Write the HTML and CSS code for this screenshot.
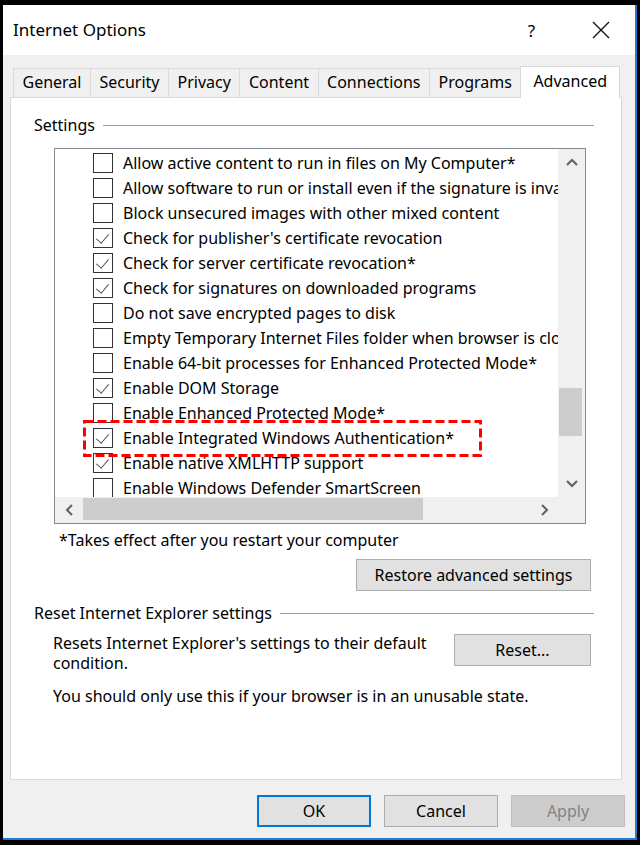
FILE: index.html
```html
<!DOCTYPE html>
<html lang="en">
<head>
<meta charset="utf-8">
<title>Internet Options</title>
<link rel="stylesheet" href="styles.css">
</head>
<body>
<div class="window">
  <div class="titlebar">
    <span class="title">Internet Options</span>
    <span class="caption-btn help">?</span>
    <span class="caption-btn close">
      <svg width="18" height="18" viewBox="0 0 18 18"><path d="M1 1 L17 17 M17 1 L1 17" stroke="#111" stroke-width="1.3" fill="none"/></svg>
    </span>
  </div>
  <div class="client">
    <div class="tabs">
      <div class="tab">General</div>
      <div class="tab">Security</div>
      <div class="tab">Privacy</div>
      <div class="tab">Content</div>
      <div class="tab">Connections</div>
      <div class="tab">Programs</div>
      <div class="tab active">Advanced</div>
    </div>
    <div class="panel">
      <div class="group-head"><span>Settings</span><i class="rule"></i></div>
      <div class="listbox">
        <ul class="items">
          <li class="item"><span class="cb"></span>Allow active content to run in files on My Computer*</li>
          <li class="item"><span class="cb"></span>Allow software to run or install even if the signature is invalid</li>
          <li class="item"><span class="cb"></span>Block unsecured images with other mixed content</li>
          <li class="item"><span class="cb on"></span>Check for publisher's certificate revocation</li>
          <li class="item"><span class="cb on"></span>Check for server certificate revocation*</li>
          <li class="item"><span class="cb on"></span>Check for signatures on downloaded programs</li>
          <li class="item"><span class="cb"></span>Do not save encrypted pages to disk</li>
          <li class="item"><span class="cb"></span>Empty Temporary Internet Files folder when browser is closed</li>
          <li class="item"><span class="cb"></span>Enable 64-bit processes for Enhanced Protected Mode*</li>
          <li class="item"><span class="cb on"></span>Enable DOM Storage</li>
          <li class="item"><span class="cb"></span>Enable Enhanced Protected Mode*</li>
          <li class="item"><span class="cb on"></span>Enable Integrated Windows Authentication*</li>
          <li class="item"><span class="cb on"></span>Enable native XMLHTTP support</li>
          <li class="item"><span class="cb"></span>Enable Windows Defender SmartScreen</li>
        </ul>
        <div class="vscroll">
          <div class="sbtn"><svg width="12" height="8" viewBox="0 0 12 8"><polyline points="1,7 6,2 11,7" fill="none" stroke="#606060" stroke-width="2"/></svg></div>
          <div class="vtrack"><div class="vthumb"></div></div>
          <div class="sbtn"><svg width="12" height="8" viewBox="0 0 12 8"><polyline points="1,1 6,6 11,1" fill="none" stroke="#606060" stroke-width="2"/></svg></div>
        </div>
        <div class="hscroll">
          <div class="sbtn hbtn-l"><svg width="8" height="12" viewBox="0 0 8 12"><polyline points="7,1 2,6 7,11" fill="none" stroke="#606060" stroke-width="2"/></svg></div>
          <div class="htrack"><div class="hthumb"></div></div>
          <div class="sbtn hbtn-r"><svg width="8" height="12" viewBox="0 0 8 12"><polyline points="1,1 6,6 1,11" fill="none" stroke="#606060" stroke-width="2"/></svg></div>
        </div>
        <div class="corner"></div>
        <svg class="highlight" width="399" height="37" viewBox="0 0 399 37"><rect x="1.5" y="1.5" width="396" height="34" fill="none" stroke="#ff0000" stroke-width="3" stroke-dasharray="9 4"/></svg>
      </div>
      <p class="note">*Takes effect after you restart your computer</p>
      <div class="restore-row"><button class="btn restore">Restore advanced settings</button></div>
      <div class="group-head reset-head"><span>Reset Internet Explorer settings</span><i class="rule"></i></div>
      <div class="reset-row">
        <p class="reset-text">Resets Internet Explorer's settings to their default condition.</p>
        <button class="btn reset">Reset...</button>
      </div>
      <p class="warn">You should only use this if your browser is in an unusable state.</p>
    </div>
    <div class="actions">
      <button class="btn act default">OK</button>
      <button class="btn act">Cancel</button>
      <button class="btn act disabled">Apply</button>
    </div>
  </div>
</div>
</body>
</html>
```
FILE: styles.css
```css
* { box-sizing: border-box; margin: 0; padding: 0; }
html, body { width: 640px; height: 845px; background: #000; overflow: hidden; }
body {
  font-family: "Noto Sans", "Open Sans", sans-serif;
  font-size: 16px;
  color: #000;
  padding: 5px 0 0 3px;
}
.window {
  width: 634px;
  height: 835px;
  border-right: 2px solid #1c7bd6;
  border-bottom: 2px solid #1c7bd6;
  background: #f0f0f0;
  display: flex;
  flex-direction: column;
}
.titlebar {
  height: 50px;
  background: #fff;
  display: flex;
  align-items: center;
  padding-left: 10px;
  flex: none;
}
.title { flex: 1; font-size: 17px; line-height: 20px; }
.caption-btn {
  width: 69px;
  height: 50px;
  display: flex;
  align-items: center;
  justify-content: center;
}
.help { font-size: 17px; }
.client {
  flex: 1;
  display: flex;
  flex-direction: column;
  padding: 11px 10px 11px 7px;
}
.tabs {
  display: flex;
  align-items: flex-end;
  height: 31px;
  margin-left: 3px;
  flex: none;
}
.tab {
  height: 29px;
  line-height: 27px;
  padding: 0 8.5px;
  border: 1px solid #d9d9d9;
  border-bottom: none;
  margin-left: -1px;
  background: #f0f0f0;
  white-space: nowrap;
}
.tab:first-child { margin-left: 0; }
.tab.active {
  height: 32px;
  margin-bottom: -1px;
  background: #fff;
  position: relative;
  z-index: 1;
  padding: 0 12px;
  line-height: 28px;
}
.panel {
  flex: 1;
  margin-right: 3px;
  background: #fff;
  border: 1px solid #d9d9d9;
  padding: 17px 27px 0 23px;
}
.group-head {
  display: flex;
  align-items: center;
  gap: 8px;
  height: 20px;
  line-height: 20px;
  white-space: nowrap;
}
.rule { flex: 1; height: 1px; background: #a0a0a0; }
.listbox {
  position: relative;
  margin: 13px 8px 0 20px;
  height: 376px;
  border: 1px solid #828790;
  display: grid;
  grid-template-columns: 1fr 27px;
  grid-template-rows: 1fr 26px;
  background: #fff;
}
.items {
  list-style: none;
  overflow: hidden;
  padding-top: 1px;
  min-width: 0;
}
.item {
  display: flex;
  align-items: center;
  height: 25px;
  padding-left: 38px;
  white-space: nowrap;
}
.cb {
  flex: none;
  width: 20px;
  height: 20px;
  border: 1px solid #333;
  margin-right: 10px;
  background: #fff;
  position: relative;
}
.cb.on::after {
  content: "";
  position: absolute;
  left: 5px;
  top: 2px;
  width: 6px;
  height: 11px;
  border-right: 1.5px solid #555;
  border-bottom: 1.5px solid #555;
  transform: rotate(40deg);
}
.vscroll {
  background: #f0f0f0;
  display: flex;
  flex-direction: column;
}
.sbtn {
  display: flex;
  align-items: center;
  justify-content: center;
  flex: none;
}
.vscroll .sbtn { height: 26px; }
.vtrack { flex: 1; }
.vthumb {
  margin: 213px 3px 0 1px;
  height: 48px;
  background: #cdcdcd;
}
.hscroll {
  background: #f0f0f0;
  display: flex;
  min-width: 0;
}
.hbtn-l { width: 28px; }
.hbtn-r { width: 27px; }
.htrack { flex: 1; }
.hthumb {
  margin-top: 1px;
  width: 340px;
  height: 22px;
  background: #cdcdcd;
}
.corner { background: #f0f0f0; }
.highlight {
  position: absolute;
  left: 28px;
  top: 271px;
}
.note {
  margin-top: 6px;
  padding-left: 25px;
  line-height: 20px;
}
.btn {
  font-family: inherit;
  font-size: 16px;
  color: #000;
  background: #e1e1e1;
  border: 1px solid #adadad;
  height: 32px;
  line-height: 28px;
  text-align: center;
}
.restore-row {
  display: flex;
  justify-content: flex-end;
  margin-top: 9px;
}
.restore { width: 235px; margin-right: 3px; }
.reset-head { margin-top: 12px; }
.reset-row {
  display: flex;
  justify-content: space-between;
  align-items: flex-start;
  margin-top: 10px;
  padding-left: 19px;
}
.reset-text { width: 395px; line-height: 20px; }
.reset { width: 137px; margin-top: 1px; margin-right: 3px; }
.warn {
  margin-top: 13px;
  padding-left: 19px;
  line-height: 20px;
}
.actions {
  display: flex;
  justify-content: flex-end;
  gap: 13px;
  margin-top: 15px;
  flex: none;
}
.act { width: 114px; }
.act.default { border: 2px solid #0078d7; }
.act.disabled { background: #cccccc; border-color: #bfbfbf; color: #838383; }
```
